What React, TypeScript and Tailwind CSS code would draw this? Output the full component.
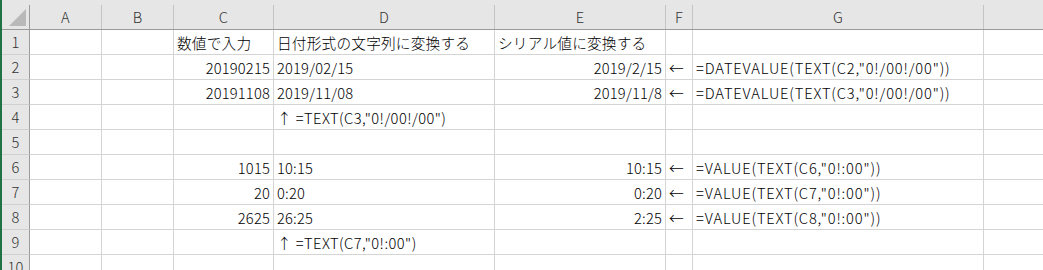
const font = { fontFamily: '"Noto Sans CJK JP", "Noto Sans", sans-serif' };

type Col = "A" | "B" | "C" | "D" | "E" | "F" | "G" | "H";

const cols: { key: Col; w: string }[] = [
  { key: "A", w: "w-[72px]" },
  { key: "B", w: "w-[72px]" },
  { key: "C", w: "w-[100px]" },
  { key: "D", w: "w-[221px]" },
  { key: "E", w: "w-[171px]" },
  { key: "F", w: "w-[27px]" },
  { key: "G", w: "w-[291px]" },
  { key: "H", w: "flex-1" },
];

type Cell = { v: string; right?: boolean; track?: string };
type Row = Partial<Record<Col, Cell>>;

// formulas are wider in the original font, so give them some extra tracking
const formula = "tracking-[0.85px]";
const note = "tracking-[0.45px]";

const rows: Row[] = [
  {
    C: { v: "数値で入力" },
    D: { v: "日付形式の文字列に変換する" },
    E: { v: "シリアル値に変換する" },
  },
  {
    C: { v: "20190215", right: true },
    D: { v: "2019/02/15" },
    E: { v: "2019/2/15", right: true },
    F: { v: "←" },
    G: { v: '=DATEVALUE(TEXT(C2,"0!/00!/00"))', track: formula },
  },
  {
    C: { v: "20191108", right: true },
    D: { v: "2019/11/08" },
    E: { v: "2019/11/8", right: true },
    F: { v: "←" },
    G: { v: '=DATEVALUE(TEXT(C3,"0!/00!/00"))', track: formula },
  },
  { D: { v: '↑ =TEXT(C3,"0!/00!/00")', track: note } },
  {},
  {
    C: { v: "1015", right: true },
    D: { v: "10:15" },
    E: { v: "10:15", right: true },
    F: { v: "←" },
    G: { v: '=VALUE(TEXT(C6,"0!:00"))', track: formula },
  },
  {
    C: { v: "20", right: true },
    D: { v: "0:20" },
    E: { v: "0:20", right: true },
    F: { v: "←" },
    G: { v: '=VALUE(TEXT(C7,"0!:00"))', track: formula },
  },
  {
    C: { v: "2625", right: true },
    D: { v: "26:25" },
    E: { v: "2:25", right: true },
    F: { v: "←" },
    G: { v: '=VALUE(TEXT(C8,"0!:00"))', track: formula },
  },
  { D: { v: '↑ =TEXT(C7,"0!:00")', track: note } },
  {},
];

export default function App() {
  return (
    <div
      className="w-[1043px] h-[270px] overflow-hidden bg-white border-l-2 border-[#217346] text-[14.67px] font-light tracking-[0.2px] text-black"
      style={font}
    >
      {/* column headers */}
      <div className="flex h-[30px] pt-[5px] bg-[#e6e6e6] border-b border-[#9b9b9b]">
        <div className="w-[28px] h-full border-r border-[#9b9b9b] flex items-end justify-end pr-[3px] pb-[3px]">
          <svg width="17" height="17" viewBox="0 0 17 17">
            <polygon points="17,0 17,17 0,17" fill="#b9b9b9" />
          </svg>
        </div>
        {cols.map((c) => (
          <div
            key={c.key}
            className={`${c.w} h-full flex items-center justify-center text-[#333] ${
              c.key === "H" ? "" : "border-r border-[#c4c4c4]"
            }`}
          >
            {c.key === "H" ? "" : c.key}
          </div>
        ))}
      </div>
      {rows.map((r, i) => (
        <div key={i} className="flex h-[25px]">
          <div className="w-[28px] h-full bg-[#e6e6e6] border-r border-b border-r-[#9b9b9b] border-b-[#d0d0d0] flex items-center justify-center text-[#333]">
            {i + 1}
          </div>
          {cols.map((c) => {
            const cell = r[c.key];
            return (
              <div
                key={c.key}
                className={`${c.w} h-full border-b border-[#d4d4d4] flex items-center whitespace-nowrap pt-[2px] ${
                  c.key === "H" ? "" : "border-r"
                } ${cell?.right ? "justify-end pr-[3px]" : "pl-[3px]"} ${cell?.track ?? ""}`}
              >
                {cell?.v}
              </div>
            );
          })}
        </div>
      ))}
    </div>
  );
}
